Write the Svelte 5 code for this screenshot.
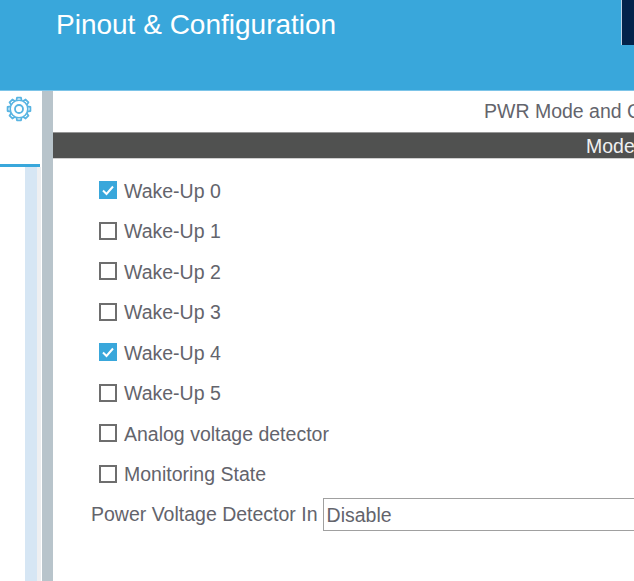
<script>
	const rows = [
		{ label: 'Wake-Up 0', checked: true },
		{ label: 'Wake-Up 1', checked: false },
		{ label: 'Wake-Up 2', checked: false },
		{ label: 'Wake-Up 3', checked: false },
		{ label: 'Wake-Up 4', checked: true },
		{ label: 'Wake-Up 5', checked: false },
		{ label: 'Analog voltage detector', checked: false },
		{ label: 'Monitoring State', checked: false }
	];

	// eight rounded teeth round the hub
	const teeth = [0, 45, 90, 135, 180, 225, 270, 315];
</script>

<div class="page">
	<header class="header">
		<h1>Pinout &amp; Configuration</h1>
		<div class="logo-box"></div>
	</header>

	<div class="body">
		<aside class="rail">
			<div class="tab">
				<svg width="26" height="26" viewBox="0 0 26 26" fill="none" stroke="#58b4e2">
					{#each teeth as angle}
						<path
							d="M10.4 4.8 L11 1.6 h4 L15.6 4.8"
							stroke-width="1.8"
							stroke-linejoin="round"
							transform="rotate({angle} 13 13)"
						/>
					{/each}
					<circle cx="13" cy="13" r="8.8" stroke-width="1.6" />
					<circle cx="13" cy="13" r="4" stroke-width="1.8" />
				</svg>
			</div>
			<div class="rail-fill">
				<div class="strip"></div>
			</div>
		</aside>
		<div class="splitter"></div>

		<main class="content">
			<div class="title">PWR Mode and Configuration</div>
			<div class="mode-bar">Mode</div>

			<div class="rows">
				{#each rows as row}
					<label class="row">
						<span class="box" class:checked={row.checked}>
							{#if row.checked}
								<svg width="14" height="14" viewBox="0 0 14 14" fill="none" stroke="#fff" stroke-width="2">
									<path d="M2 7.5l3.5 3.5L12 3.5" />
								</svg>
							{/if}
						</span>
						{row.label}
					</label>
				{/each}
			</div>

			<div class="detector">
				<span>Power Voltage Detector In</span>
				<div class="select">Disable</div>
			</div>
		</main>
	</div>
</div>

<style>
	:global(body) {
		margin: 0;
		overflow: hidden;
	}

	.page {
		width: 634px;
		height: 581px;
		display: flex;
		flex-direction: column;
		overflow: hidden;
		font-family: 'Liberation Sans', Arial, sans-serif;
		font-size: 19.5px;
		color: #63646c;
		background: #fff;
	}

	.header {
		height: 91px;
		flex: none;
		display: flex;
		justify-content: space-between;
		align-items: flex-start;
		background: #39a7db;
		box-sizing: border-box;
		border-bottom: 1px solid #7cc4e8;
	}

	h1 {
		margin: 9px 0 0 56px;
		font-size: 28px;
		line-height: 32px;
		font-weight: 400;
		color: #fff;
	}

	.logo-box {
		width: 13px;
		height: 45px;
		box-sizing: border-box;
		background: #03234b;
		border-left: 1px solid #bcd4e6;
	}

	.body {
		flex: 1;
		display: flex;
		min-height: 0;
	}

	.rail {
		width: 42px;
		flex: none;
		display: flex;
		flex-direction: column;
	}

	.tab {
		height: 76px;
		flex: none;
		box-sizing: border-box;
		padding: 5px 0 0 6px;
		border-bottom: 3px solid #39a7db;
		margin-right: 2px;
	}

	.rail-fill {
		flex: 1;
		display: flex;
		padding-left: 25px;
		background: #fff;
	}

	.strip {
		width: 12px;
		background: #d6e6f4;
		border-right: 4px solid #eeeff1;
	}

	.splitter {
		width: 11px;
		flex: none;
		background: #b8c4cb;
	}

	.content {
		flex: 1;
		min-width: 0;
		overflow: hidden;
		white-space: nowrap;
	}

	.title {
		height: 41px;
		box-sizing: border-box;
		padding: 8px 0 0 431px;
		line-height: 24px;
	}

	.mode-bar {
		height: 27px;
		box-sizing: border-box;
		padding-left: 533px;
		line-height: 26px;
		color: #f0f0f0;
		background: #505150;
		border-top: 1px solid #969696;
		border-bottom: 1px solid #cfcfcf;
	}

	.rows {
		display: flex;
		flex-direction: column;
		gap: 19.5px;
		padding: 21.5px 0 0 46px;
	}

	.row {
		display: flex;
		align-items: center;
		gap: 7px;
		height: 21px;
	}

	.box {
		width: 18px;
		height: 18px;
		flex: none;
		box-sizing: border-box;
		display: flex;
		align-items: center;
		justify-content: center;
		margin-bottom: 2px;
		background: #fff;
		border: 2px solid #6e6e6e;
	}

	.box.checked {
		background: #39a7db;
		border-color: #39a7db;
	}

	.detector {
		display: flex;
		align-items: center;
		gap: 5px;
		margin-top: 12.5px;
		padding-left: 38px;
		line-height: 33px;
	}

	.select {
		width: 320px;
		height: 33px;
		flex: none;
		box-sizing: border-box;
		padding-left: 3px;
		line-height: 32px;
		border: 1px solid #a0a0a0;
	}
</style>
